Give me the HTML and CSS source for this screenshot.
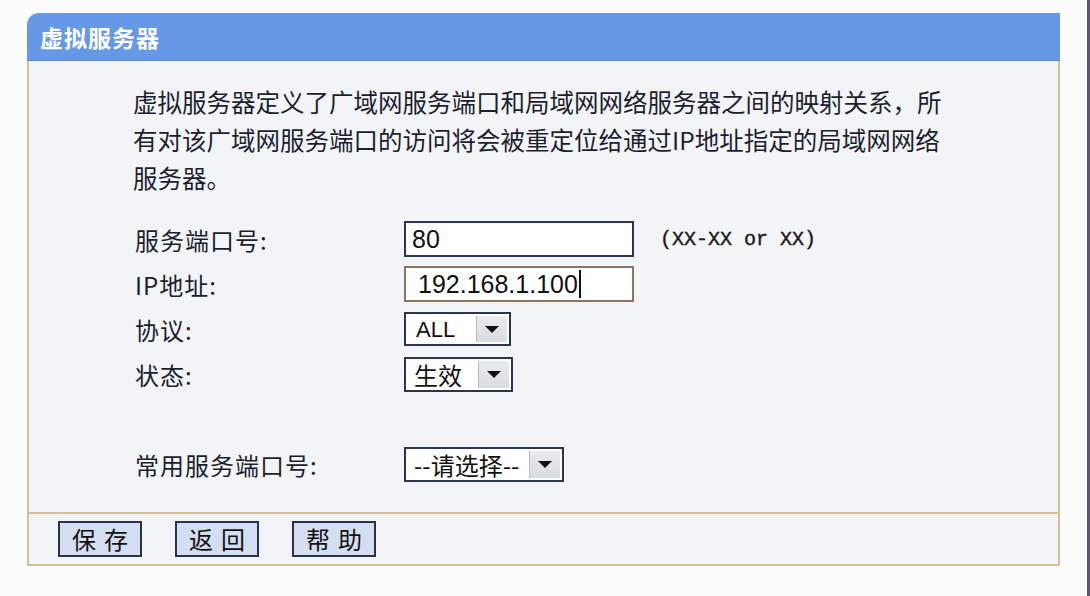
FILE: index.html
```html
<!DOCTYPE html>
<html lang="zh-CN">
<head>
  <meta charset="UTF-8" />
  <meta name="viewport" content="width=device-width, initial-scale=1.0"/>
  <title>虚拟服务器</title>
  <link rel="stylesheet" href="styles.css">
</head>
<body>

  <div class="page">
    <div class="panel">
      <!-- Title bar -->
      <div class="panel-title">虚拟服务器</div>

      <!-- Form body -->
      <div class="panel-body">
        <p class="intro">虚拟服务器定义了广域网服务端口和局域网网络服务器之间的映射关系，所有对该广域网服务端口的访问将会被重定位给通过IP地址指定的局域网网络服务器。</p>

        <div class="form">
          <div class="label">服务端口号:</div>
          <div class="field">80</div>
          <div class="hint">(XX-XX or XX)</div>

          <div class="label">IP地址:</div>
          <div class="field focused">192.168.1.100<span class="caret"></span></div>
          <div></div>

          <div class="label">协议:</div>
          <div class="select sel-proto"><span class="sel-text latin">ALL</span><span class="sel-arrow"></span></div>
          <div></div>

          <div class="label">状态:</div>
          <div class="select sel-state"><span class="sel-text">生效</span><span class="sel-arrow"></span></div>
          <div></div>

          <div class="spacer"></div>

          <div class="label">常用服务端口号:</div>
          <div class="select sel-common"><span class="sel-text">--请选择--</span><span class="sel-arrow"></span></div>
          <div></div>
        </div>
      </div>

      <!-- Buttons -->
      <div class="panel-foot">
        <button class="btn">保存</button>
        <button class="btn">返回</button>
        <button class="btn">帮助</button>
      </div>
    </div>
  </div>

  <div class="edge"></div>

</body>
</html>
```

FILE: styles.css
```css
body {
  margin: 0;
  height: 596px;
  display: flex;
  background: #fcfcfd;
  color: #1e2130;
  font-family: "Noto Sans CJK SC", "Noto Sans", sans-serif;
  overflow: hidden;
}
.page {
  flex: 1;
  padding: 13px 0 0 27px;
}
.edge {
  width: 3px;
  background: #5e566a;
}
.panel {
  width: 1033px;
}
.panel-title {
  height: 48px;
  line-height: 48px;
  padding-left: 13px;
  background: #6598e6;
  border-bottom: 1px solid #5a88d2;
  box-sizing: border-box;
  border-radius: 12px 0 0 0;
  color: #fff;
  font-size: 23px;
  font-weight: bold;
  letter-spacing: 1px;
}
.panel-body {
  background: #f3f4f8;
  border: 2px solid #d6c09c;
  border-top: none;
  padding: 22px 0 30px 0;
}
.intro {
  margin: 0 0 24px 104px;
  width: 815px;
  font-size: 24.5px;
  line-height: 38px;
  color: #1c1f2e;
}
.form {
  display: grid;
  grid-template-columns: 269px 256px auto;
  grid-auto-rows: 36px;
  row-gap: 9px;
  padding-left: 106px;
  align-items: center;
}
.spacer {
  grid-column: 1 / 4;
}
.label {
  font-size: 24px;
  letter-spacing: 1px;
  color: #1c1f2e;
}
.field {
  width: 230px;
  height: 36px;
  box-sizing: border-box;
  border: 2px solid #2c3550;
  background: #fff;
  padding-left: 6px;
  font-family: "Liberation Sans", Arial, sans-serif;
  font-size: 25px;
  line-height: 32px;
  color: #111;
  display: flex;
  align-items: center;
}
.field.focused {
  border-color: #8c7560;
  padding-left: 12px;
}
.caret {
  display: inline-block;
  width: 2px;
  height: 28px;
  background: #111;
  margin-left: 1px;
}
.hint {
  font-family: "Liberation Mono", "DejaVu Sans Mono", monospace;
  font-size: 20px;
  color: #1a1a1a;
  -webkit-text-stroke: 0.4px #1a1a1a;
}
.select {
  height: 35px;
  box-sizing: border-box;
  border: 2px solid #2c3550;
  background: #fff;
  display: flex;
  align-items: stretch;
}
.sel-proto { width: 107px; height: 34px; }
.sel-state { width: 109px; }
.sel-common { width: 160px; }
.sel-text {
  flex: 1;
  padding-left: 8px;
  font-size: 24px;
  line-height: 31px;
  color: #111;
  white-space: nowrap;
}
.sel-text.latin {
  font-family: "Liberation Sans", Arial, sans-serif;
  font-size: 22px;
  padding-left: 10px;
}
.sel-arrow {
  width: 30px;
  margin: 2px;
  background: linear-gradient(#e9eaed, #dadce0);
  border-left: 1px solid #b9bcc4;
  display: flex;
  align-items: center;
  justify-content: center;
}
.sel-arrow::after {
  content: "";
  border-left: 7px solid transparent;
  border-right: 7px solid transparent;
  border-top: 7px solid #111;
}
.panel-foot {
  background: #f3f4f8;
  border: 2px solid #d6c09c;
  border-top: none;
  padding: 7px 29px;
  display: flex;
  gap: 33px;
}
.btn {
  width: 84px;
  height: 36px;
  background: #d5ddf0;
  border: 2px solid #2b3447;
  font-family: "Noto Sans CJK SC", sans-serif;
  font-size: 24px;
  line-height: 30px;
  letter-spacing: 8px;
  padding: 0 0 0 8px;
  color: #111;
  cursor: pointer;
}
```
